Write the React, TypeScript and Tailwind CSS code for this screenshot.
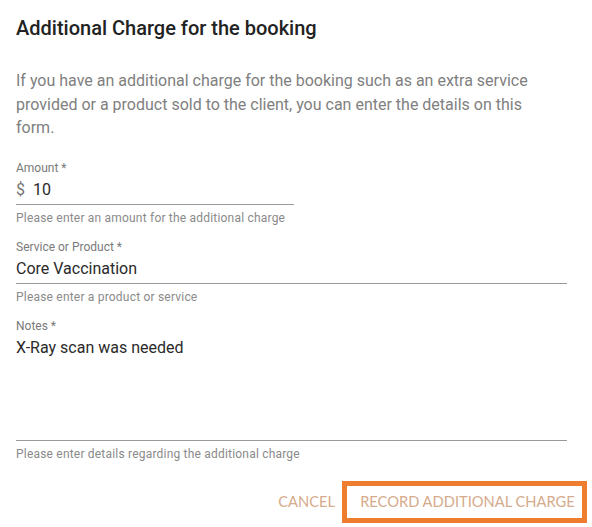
import React from "react";

function Field({
  label,
  value,
  helper,
  width,
  prefix,
  tall,
}: {
  label: string;
  value: string;
  helper: string;
  width: string;
  prefix?: string;
  tall?: boolean;
}) {
  return (
    <div className="flex flex-col">
      <div className={`${width} border-b border-[#9a9a9a]`}>
        <div className="text-[12px] leading-[16px] text-[#7a7a7a]">{label} *</div>
        <div className={`flex gap-[8px] text-[16px] leading-[24px] text-[#2a2a2a] ${tall ? "h-[106px] items-start pt-[2px]" : "h-[28px] items-center"}`}>
          {prefix && <span className="text-[#757575]">{prefix}</span>}
          <span>{value}</span>
        </div>
      </div>
      <div className="mt-[5px] text-[12px] leading-[16px] text-[#8a8a8a] tracking-[0.2px]">{helper}</div>
    </div>
  );
}

export default function App() {
  return (
    <div className="w-[592px] h-[527px] bg-white font-['Roboto',sans-serif] px-4">
      <h2 className="pt-[16px] text-[20px] leading-[24px] font-medium text-[#222222]">
        Additional Charge for the booking
      </h2>

      <p className="mt-[29px] text-[16px] leading-[23.5px] text-[#808080] pr-[30px]">
        If you have an additional charge for the booking such as an extra service provided or a product sold to the client, you can enter the details on this form.
      </p>

      <div className="mt-[20px] flex flex-col gap-[13px]">
        <Field label="Amount" prefix="$" value="10" helper="Please enter an amount for the additional charge" width="w-[278px]" />
        <Field label="Service or Product" value="Core Vaccination" helper="Please enter a product or service" width="w-[551px]" />
        <Field label="Notes" value="X-Ray scan was needed" helper="Please enter details regarding the additional charge" width="w-[551px]" tall />
      </div>

      <div className="mt-[19px] mr-[-11px] flex items-center justify-end gap-[7px] font-['Lato',sans-serif] text-[14.7px] text-[#d5ab8c]">
        <button className="h-[42px] uppercase">Cancel</button>
        <button className="h-[42px] w-[245px] border-[5px] border-[#ee7d30] pl-[6px] uppercase">Record Additional Charge</button>
      </div>
    </div>
  );
}
